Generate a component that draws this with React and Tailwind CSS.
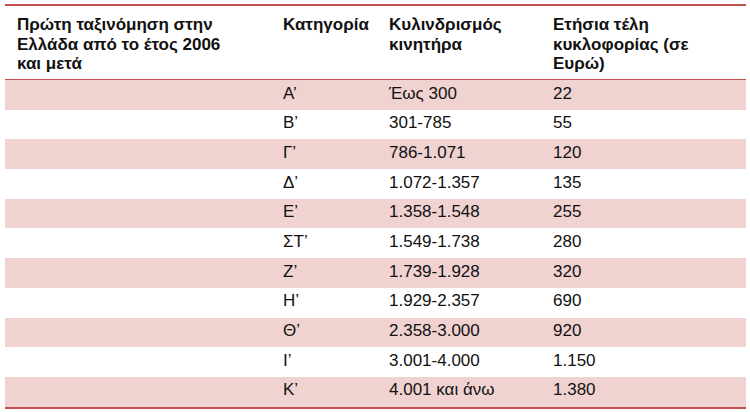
const rows = [
  ["Α’", "Έως 300", "22"],
  ["Β’", "301-785", "55"],
  ["Γ’", "786-1.071", "120"],
  ["Δ’", "1.072-1.357", "135"],
  ["Ε’", "1.358-1.548", "255"],
  ["ΣΤ’", "1.549-1.738", "280"],
  ["Ζ’", "1.739-1.928", "320"],
  ["Η’", "1.929-2.357", "690"],
  ["Θ’", "2.358-3.000", "920"],
  ["Ι’", "3.001-4.000", "1.150"],
  ["Κ’", "4.001 και άνω", "1.380"],
]

const cols = "grid grid-cols-[265px_106px_164px_206px]"

export default function App() {
  return (
    <div className="w-[750px] h-[412px] bg-white pt-[4px] pl-[5px] font-['Liberation_Sans',Arial,sans-serif] text-black">
      <div className="w-[741px] border-t-2 border-b-2 border-[#c0504d]">
        {/* header */}
        <div className={`${cols} h-[74px] border-b border-[#c0504d] pt-[9px] text-[17px] font-bold leading-[19.5px] text-[#111]`}>
          <div className="pl-[12px] pr-[36px]">Πρώτη ταξινόμηση στην Ελλάδα από το έτος 2006 και μετά</div>
          <div className="pl-[13px]">Κατηγορία</div>
          <div className="pl-[13px] pr-2">Κυλινδρισμός κινητήρα</div>
          <div className="pl-[13px] pr-[40px]">Ετήσια τέλη κυκλοφορίας (σε Ευρώ)</div>
        </div>

        {/* rows */}
        {rows.map((r, i) => (
          <div
            key={r[0]}
            className={`${cols} h-[29.7px] items-center pb-[3px] text-[17px] text-[#111] ${i % 2 === 0 ? "bg-[#f0d2d1]" : "bg-white"}`}
          >
            <div />
            <div className="pl-[13px]">{r[0]}</div>
            <div className="pl-[13px]">{r[1]}</div>
            <div className="pl-[13px]">{r[2]}</div>
          </div>
        ))}
      </div>
    </div>
  )
}
